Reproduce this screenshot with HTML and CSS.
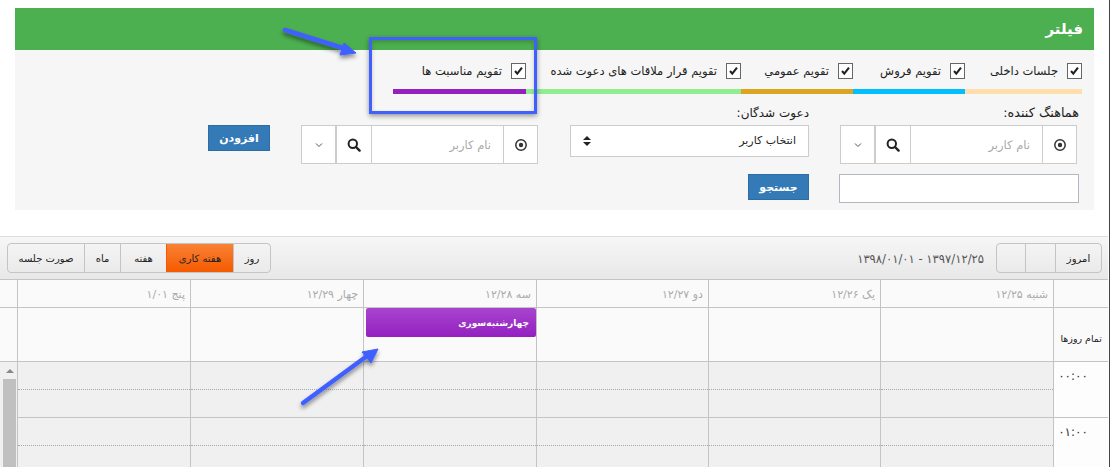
FILE: index.html
```html
<!DOCTYPE html>
<html lang="fa" dir="rtl">
<head>
    <meta charset="UTF-8">
    <title>تقویم</title>
    <link rel="stylesheet" href="styles.css">
</head>
<body>
    <svg class="defs" width="0" height="0">
        <symbol id="i-search" viewBox="0 0 14 14"><circle cx="5.8" cy="5.8" r="4.2" fill="none" stroke="#222" stroke-width="2"/><path d="M9 9l3.6 3.6" stroke="#222" stroke-width="2.4" stroke-linecap="round"/></symbol>
        <symbol id="i-radio" viewBox="0 0 14 14"><circle cx="7" cy="7" r="5.2" fill="none" stroke="#333" stroke-width="1.5"/><circle cx="7" cy="7" r="2.2" fill="#333"/></symbol>
        <symbol id="i-chev" viewBox="0 0 8 6"><path d="M1 1.5l3 3 3-3" fill="none" stroke="#555" stroke-width="1"/></symbol>
        <symbol id="i-check" viewBox="0 0 15 15"><path d="M3.5 7.5l2.6 3 5.4-7" fill="none" stroke="#222" stroke-width="2.4"/></symbol>
    </svg>

    <section class="filter">
        <h2 class="filter-title">فیلتر</h2>
        <div class="filter-body">
            <div class="cats">
                <label class="cat cat-internal"><span class="box"><svg><use href="#i-check"/></svg></span>جلسات داخلی</label>
                <label class="cat cat-sales"><span class="box"><svg><use href="#i-check"/></svg></span>تقویم فروش</label>
                <label class="cat cat-public"><span class="box"><svg><use href="#i-check"/></svg></span>تقويم عمومي</label>
                <label class="cat cat-invited"><span class="box"><svg><use href="#i-check"/></svg></span>تقویم قرار ملاقات های دعوت شده</label>
                <label class="cat cat-events"><span class="box"><svg><use href="#i-check"/></svg></span>تقویم مناسبت ها</label>
            </div>

            <div class="fields">
                <div class="field field-org">
                    <div class="field-label">هماهنگ کننده:</div>
                    <div class="picker">
                        <span class="cell cell-radio"><svg class="ic"><use href="#i-radio"/></svg></span>
                        <span class="cell cell-input">نام کاربر</span>
                        <span class="cell cell-search"><svg class="ic"><use href="#i-search"/></svg></span>
                        <span class="cell cell-chev"><svg class="ic-chev"><use href="#i-chev"/></svg></span>
                    </div>
                </div>
                <div class="field field-guests">
                    <div class="field-label">دعوت شدگان:</div>
                    <div class="select">
                        <span>انتخاب کاربر</span>
                        <span class="sort"><i class="up"></i><i class="down"></i></span>
                    </div>
                </div>
                <div class="field field-third">
                    <div class="picker">
                        <span class="cell cell-radio"><svg class="ic"><use href="#i-radio"/></svg></span>
                        <span class="cell cell-input">نام کاربر</span>
                        <span class="cell cell-search"><svg class="ic"><use href="#i-search"/></svg></span>
                        <span class="cell cell-chev"><svg class="ic-chev"><use href="#i-chev"/></svg></span>
                    </div>
                </div>
                <button class="btn btn-add">افزودن</button>
            </div>

            <div class="search-row">
                <div class="text-input"></div>
                <button class="btn btn-search">جستجو</button>
            </div>
        </div>
    </section>

    <section class="calendar">
        <div class="toolbar">
            <div class="btn-group nav-group">
                <span class="seg seg-today">امروز</span>
                <span class="seg seg-next"></span>
                <span class="seg seg-prev"></span>
            </div>
            <div class="range">۱۳۹۷/۱۲/۲۵ - ۱۳۹۸/۰۱/۰۱</div>
            <div class="btn-group views">
                <span class="seg seg-day">روز</span>
                <span class="seg seg-work active">هفته کاری</span>
                <span class="seg seg-week">هفته</span>
                <span class="seg seg-month">ماه</span>
                <span class="seg seg-minutes">صورت جلسه</span>
            </div>
        </div>

        <div class="grid head-row">
            <div class="c axis"></div>
            <div class="c">شنبه ۱۲/۲۵</div>
            <div class="c">یک ۱۲/۲۶</div>
            <div class="c">دو ۱۲/۲۷</div>
            <div class="c">سه ۱۲/۲۸</div>
            <div class="c">چهار ۱۲/۲۹</div>
            <div class="c">پنج ۱/۰۱</div>
            <div class="c gutter"></div>
        </div>

        <div class="grid allday-row">
            <div class="c axis">تمام روزها</div>
            <div class="c"></div>
            <div class="c"></div>
            <div class="c"></div>
            <div class="c"><div class="event">چهارشنبه سوری</div></div>
            <div class="c"></div>
            <div class="c"></div>
            <div class="c gutter"></div>
        </div>

        <div class="hours">
            <div class="scrollbar"><i class="scroll-up"></i><div class="thumb"></div></div>
            <div class="grid hour-row">
                <div class="c axis">۰۰:۰۰</div>
                <div class="c"></div><div class="c"></div><div class="c"></div>
                <div class="c"></div><div class="c"></div><div class="c"></div>
                <div class="c gutter"></div>
            </div>
            <div class="grid hour-row">
                <div class="c axis">۰۱:۰۰</div>
                <div class="c"></div><div class="c"></div><div class="c"></div>
                <div class="c"></div><div class="c"></div><div class="c"></div>
                <div class="c gutter"></div>
            </div>
        </div>
    </section>

    <!-- annotations drawn over the screenshot -->
    <div class="mark-box"></div>
    <svg class="arrows" width="1110" height="467">
        <defs>
            <filter id="soft" x="-20%" y="-40%" width="140%" height="200%"><feDropShadow dx="0" dy="3" stdDeviation="2" flood-color="#000" flood-opacity="0.45"/></filter>
        </defs>
        <g filter="url(#soft)" fill="#3f5fff" stroke="#3f5fff">
            <path d="M285 30L346 49" stroke-width="4.5" stroke-linecap="round"/>
            <path d="M356 53L340 55L344 43Z" stroke-width="1"/>
            <path d="M303 403L367 356" stroke-width="4.5" stroke-linecap="round"/>
            <path d="M378 349L371 363L362 352Z" stroke-width="1"/>
        </g>
    </svg>
</body>
</html>
```

FILE: styles.css
```css
html, body {
    margin: 0;
    height: 467px;
    overflow: hidden;
    background: #fff;
}

body {
    position: relative;
    box-sizing: border-box;
    border-right: 1px solid #444;
    font-family: "DejaVu Sans", sans-serif;
    font-size: 11px;
    color: #222;
}

.defs {
    position: absolute;
}

/* filter panel */
.filter {
    margin: 8px 15px 0 15px;
    background: #f6f6f6;
    height: 202px;
}

.filter-title {
    margin: 0;
    height: 42px;
    line-height: 42px;
    padding-right: 11px;
    background: #4caf50;
    color: #fff;
    font-size: 15px;
    font-weight: bold;
}

.filter-body {
    padding: 12px 12px 0 0;
}

.cats {
    display: flex;
    width: 689px;
}

.cat {
    display: flex;
    align-items: center;
    gap: 9px;
    height: 32px;
    padding-bottom: 10px;
    box-sizing: border-box;
    border-bottom: 5px solid;
    font-size: 11.5px;
    white-space: nowrap;
}

.cat-internal { width: 117px; border-color: #ffdead; }
.cat-sales { width: 112px; border-color: #00bfff; }
.cat-public { width: 112px; border-color: #daa520; }
.cat-invited { width: 215px; border-color: #90ee90; }
.cat-events { width: 133px; border-color: #9320bf; }

.box {
    width: 13px;
    height: 14px;
    border: 1px solid #666;
    background: #fff;
    flex: none;
}

.box svg {
    display: block;
    width: 13px;
    height: 14px;
}

.fields {
    display: flex;
    align-items: flex-start;
    margin-top: 12px;
    margin-right: 5px;
    height: 58px;
}

.field-label {
    height: 19px;
    line-height: 14px;
    font-size: 12px;
}

.field-org { width: 237px; }

.field-org .field-label {
    margin-right: -2px;
    font-size: 12.8px;
}

.field-guests {
    width: 239px;
    margin-right: 31px;
}

.field-third {
    width: 237px;
    margin-right: 32px;
    padding-top: 19px;
}

.picker {
    display: flex;
    height: 39px;
    box-sizing: border-box;
    background: #fff;
    border: 1px solid #ccc;
}

.cell {
    display: flex;
    align-items: center;
    justify-content: center;
    border-left: 1px solid #ccc;
    box-sizing: border-box;
}

.cell-radio { width: 34px; }
.cell-input {
    width: 132px;
    justify-content: flex-start;
    padding-right: 12px;
    color: #aaa;
    font-size: 11.5px;
}
.cell-search { width: 36px; border-left-width: 2px; }
.cell-chev { flex: 1; border-left: 0; }

.ic {
    width: 14px;
    height: 14px;
}

.ic-chev {
    width: 8px;
    height: 6px;
}

.select {
    display: flex;
    justify-content: space-between;
    height: 32px;
    line-height: 30px;
    box-sizing: border-box;
    padding: 0 12px;
    background: #fff;
    border: 1px solid #ccc;
}

.sort {
    display: flex;
    flex-direction: column;
    justify-content: center;
    gap: 2px;
}

.sort i {
    display: block;
    border-left: 4px solid transparent;
    border-right: 4px solid transparent;
}

.sort .up { border-bottom: 4px solid #222; }
.sort .down { border-top: 4px solid #222; }

.btn {
    padding: 0;
    background: #337ab7;
    border: 1px solid #2e6da4;
    color: #fff;
    font-family: inherit;
    font-size: 11px;
    font-weight: bold;
}

.btn-add {
    width: 62px;
    height: 26px;
    margin-top: 19px;
    margin-right: 31px;
}

.search-row {
    display: flex;
    margin-top: 10px;
    margin-right: 3px;
}

.text-input {
    width: 240px;
    height: 29px;
    box-sizing: border-box;
    background: #fff;
    border: 1px solid #b0b8c0;
}

.btn-search {
    width: 61px;
    height: 26px;
    margin-right: 30px;
}

/* calendar */
.calendar {
    margin-top: 26px;
    margin-right: 1px;
    width: 1108px;
}

.toolbar {
    display: flex;
    align-items: center;
    height: 43px;
    box-sizing: border-box;
    padding: 0 6px 0 7px;
    border-top: 1px solid #ddd;
    background: linear-gradient(#f6f6f6, #e8e8e8);
}

.btn-group {
    display: flex;
    height: 30px;
    box-sizing: border-box;
    border: 1px solid #c4c4c4;
    border-radius: 4px;
}

.seg {
    display: flex;
    align-items: center;
    justify-content: center;
    border-left: 1px solid #c4c4c4;
    box-sizing: border-box;
    font-size: 10px;
    color: #222;
}

.seg:last-child { border-left: 0; }

.seg-today { width: 46px; }
.seg-next { width: 30px; }
.seg-prev { width: 28px; }

.range {
    margin-right: 12px;
    padding-top: 2px;
    color: #555;
    font-size: 11.6px;
}

.views {
    margin-right: auto;
}

.seg-day { width: 37px; }
.seg-work { width: 67px; }
.seg-week { width: 46px; }
.seg-month { width: 36px; }
.seg-minutes { width: 76px; }

.seg.active {
    background: linear-gradient(#f98235, #f55a00);
    border-color: #f55a00;
}

.grid {
    display: grid;
    grid-template-columns: 55px 173px 172px 172px 173px 173px 173px 17px;
}

.c {
    box-sizing: border-box;
    border-left: 1px solid #c4c4c4;
    border-bottom: 1px solid #c4c4c4;
}

.gutter { border-left: 0; }

.head-row .c {
    height: 29px;
    line-height: 29px;
    padding-right: 5px;
    background: #fafafa;
    border-top: 1px solid #c4c4c4;
    color: #aaa;
    font-size: 11px;
}

.allday-row .c {
    height: 54px;
    background: #fafafa;
}

.allday-row .axis {
    padding: 24px 6px 0 0;
    line-height: 14px;
    font-size: 9.5px;
    white-space: nowrap;
    color: #222;
}

.event {
    height: 29px;
    line-height: 31px;
    margin-left: 2px;
    padding-right: 7px;
    border-radius: 2px;
    background: linear-gradient(#a845cf, #9320bf);
    color: #fff;
    font-size: 9px;
    font-weight: bold;
    word-spacing: -3px;
}

.hours {
    position: relative;
}

.hour-row .c {
    height: 56px;
    background: #f0f0f0;
    position: relative;
}

.hour-row .c::after {
    content: "";
    position: absolute;
    top: 27px;
    left: 0;
    right: 0;
    border-top: 1px dotted #aaa;
}

.hour-row .axis {
    background: #fdfdfd;
    padding: 7px 20px 0 0;
    color: #333;
    font-size: 12px;
}

.hour-row .axis::after {
    display: none;
}

.hour-row .gutter {
    border-bottom-color: transparent;
}

.scrollbar {
    position: absolute;
    left: 0;
    top: 0;
    width: 17px;
    height: 112px;
    background: #f0f0f0;
    z-index: 1;
}

.scroll-up {
    position: absolute;
    top: 7px;
    left: 6px;
    border-left: 4px solid transparent;
    border-right: 4px solid transparent;
    border-bottom: 4px solid #888;
}

.thumb {
    position: absolute;
    top: 17px;
    left: 3px;
    width: 13px;
    bottom: 0;
    background: #c0c0c0;
}

/* annotations */
.mark-box {
    position: absolute;
    left: 369px;
    top: 37px;
    width: 168px;
    height: 77px;
    box-sizing: border-box;
    border: 3px solid #3f5fff;
    box-shadow: 0 2px 5px rgba(0, 0, 0, 0.4), inset 0 2px 4px rgba(0, 0, 0, 0.2);
}

.arrows {
    position: absolute;
    left: 0;
    top: 0;
    pointer-events: none;
}
```
